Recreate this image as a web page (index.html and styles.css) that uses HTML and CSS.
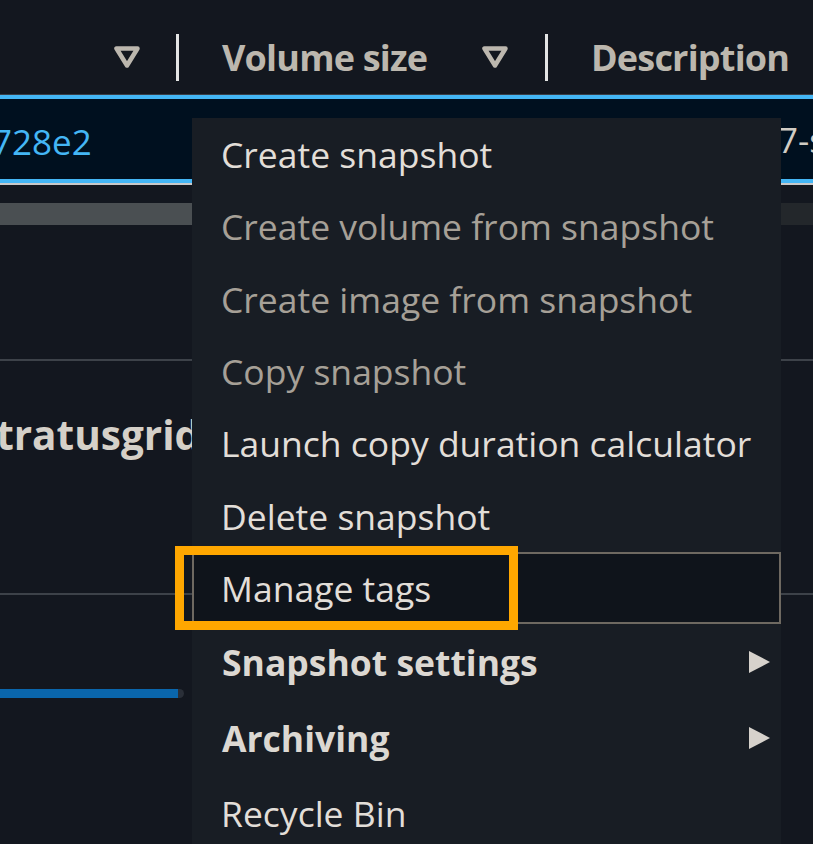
FILE: index.html
```html
<!DOCTYPE html>
<html>
<head>
  <title>Snapshots - Actions</title>
  <link rel="stylesheet" href="styles.css">
</head>
<body>
  <div class="page">
    <div class="table">
      <div class="thead">
        <div class="th th-id">
          <svg class="filter" viewBox="0 0 26 22"><path d="M2.5 2.5 H23.5 L13 19.5 Z"/></svg>
        </div>
        <span class="divider"></span>
        <div class="th th-size">
          <span class="th-label">Volume size</span>
          <svg class="filter" viewBox="0 0 26 22"><path d="M2.5 2.5 H23.5 L13 19.5 Z"/></svg>
        </div>
        <span class="divider"></span>
        <div class="th th-desc">
          <span class="th-label">Description</span>
        </div>
      </div>

      <div class="row selected">
        <div class="td td-id"><a class="link">728e2</a></div>
        <div class="td td-size">8 GiB</div>
        <div class="td td-desc"><span>7-snapshot</span></div>
      </div>

      <div class="scrollbar"><div class="thumb"></div></div>
    </div>

    <div class="details">
      <div class="panel panel-head">
        <h2 class="owner">stratusgrid</h2>
      </div>
      <div class="panel panel-progress">
        <div class="progress"><div class="progress-fill"></div></div>
      </div>
    </div>

    <ul class="menu">
      <li class="item">Create snapshot</li>
      <li class="item disabled">Create volume from snapshot</li>
      <li class="item disabled">Create image from snapshot</li>
      <li class="item disabled">Copy snapshot</li>
      <li class="item">Launch copy duration calculator</li>
      <li class="item">Delete snapshot</li>
      <li class="item active">Manage tags<span class="callout"></span></li>
      <li class="item sub">Snapshot settings
        <svg class="caret" viewBox="0 0 21 22"><path d="M0 0 L21 11 L0 22 Z"/></svg>
      </li>
      <li class="item sub">Archiving
        <svg class="caret" viewBox="0 0 21 22"><path d="M0 0 L21 11 L0 22 Z"/></svg>
      </li>
      <li class="item tall">Recycle Bin</li>
    </ul>
  </div>
</body>
</html>
```

FILE: styles.css
```css
* { box-sizing: border-box; margin: 0; padding: 0; }

body {
  font-family: 'Open Sans', 'Noto Sans', sans-serif;
  background: #13171f;
  color: #d6d1c9;
  overflow: hidden;
}

.page {
  position: relative;
  width: 813px;
  height: 844px;
  overflow: hidden;
}

/* table header */
.thead {
  display: flex;
  align-items: center;
  height: 95px;
  padding-top: 20px;
  border-bottom: 1px solid #3a3f46;
}

.th {
  display: flex;
  align-items: center;
  height: 100%;
}

.th-label {
  font-size: 36px;
  font-weight: 700;
  color: #bcb7ae;
  letter-spacing: -0.8px;
}

.filter {
  width: 26px;
  height: 22px;
  fill: none;
  stroke: #bcb7ae;
  stroke-width: 4.5;
  stroke-linejoin: round;
}

.th-id {
  width: 176px;
  justify-content: flex-end;
  padding-right: 36px;
}

.th-size {
  width: 366px;
  justify-content: space-between;
  padding: 0 37px 0 43px;
}

.th-desc {
  flex: 1;
  padding-left: 43px;
}

.divider {
  width: 3px;
  height: 47px;
  background: #e4e4e4;
}

/* selected row */
.row {
  display: flex;
  align-items: center;
  height: 88px;
  font-size: 35px;
  white-space: nowrap;
}

.row.selected {
  background: #00101f;
  border-top: 4px solid #44b6f5;
  border-bottom: 4px solid #44b6f5;
  box-shadow: 0 2px 0 #c9c9c9;
}

.td { overflow: hidden; }

.td-id {
  width: 179px;
  text-indent: -8px;
  padding-top: 4px;
}

.link { color: #44b6f5; }

.td-size { width: 369px; padding-left: 43px; }

.td-desc {
  flex: 1;
  padding-left: 230px;
  color: #d0ccc4;
}

.scrollbar {
  margin-top: 20px;
  height: 22px;
  background: #23272b;
}

.thumb {
  width: 640px;
  height: 100%;
  background: #4a4f52;
}

/* lower panels */
.details {
  margin-top: 134px;
}

.panel { border-top: 2px solid #3d4249; }

.panel-head {
  height: 234px;
  padding-top: 46px;
}

.owner {
  font-size: 40.5px;
  font-weight: 700;
  color: #d5d0c8;
  margin-left: -24px;
}

.panel-progress { padding-top: 94px; }

.progress {
  width: 184px;
  height: 9px;
  background: #2a2f38;
  border-radius: 0 5px 5px 0;
}

.progress-fill {
  width: 178px;
  height: 100%;
  background: #0a66ac;
}

/* actions dropdown */
.menu {
  position: absolute;
  left: 192px;
  top: 118px;
  width: 589px;
  height: 740px;
  background: #181d24;
  list-style: none;
}

.item {
  position: relative;
  display: flex;
  align-items: center;
  justify-content: space-between;
  height: 72.3px;
  line-height: 72px;
  padding: 0 11px 0 29px;
  font-size: 35.5px;
  color: #e2ded8;
  white-space: nowrap;
}

.item.disabled { color: #a6a097; }

.item.active {
  background: #0f141b;
  border: 2px solid #6e6961;
  padding-left: 27px;
}

.item.sub {
  height: 76px;
  line-height: 76px;
  font-weight: 700;
  color: #dcd8d2;
  padding-left: 30px;
}

.item.tall {
  height: 74px;
  line-height: 70px;
}

.caret {
  width: 21px;
  height: 22px;
  fill: #d6d2cc;
}

.callout {
  position: absolute;
  left: -19px;
  top: -8px;
  width: 343px;
  height: 84px;
  border: 9px solid #ffa700;
}
```
